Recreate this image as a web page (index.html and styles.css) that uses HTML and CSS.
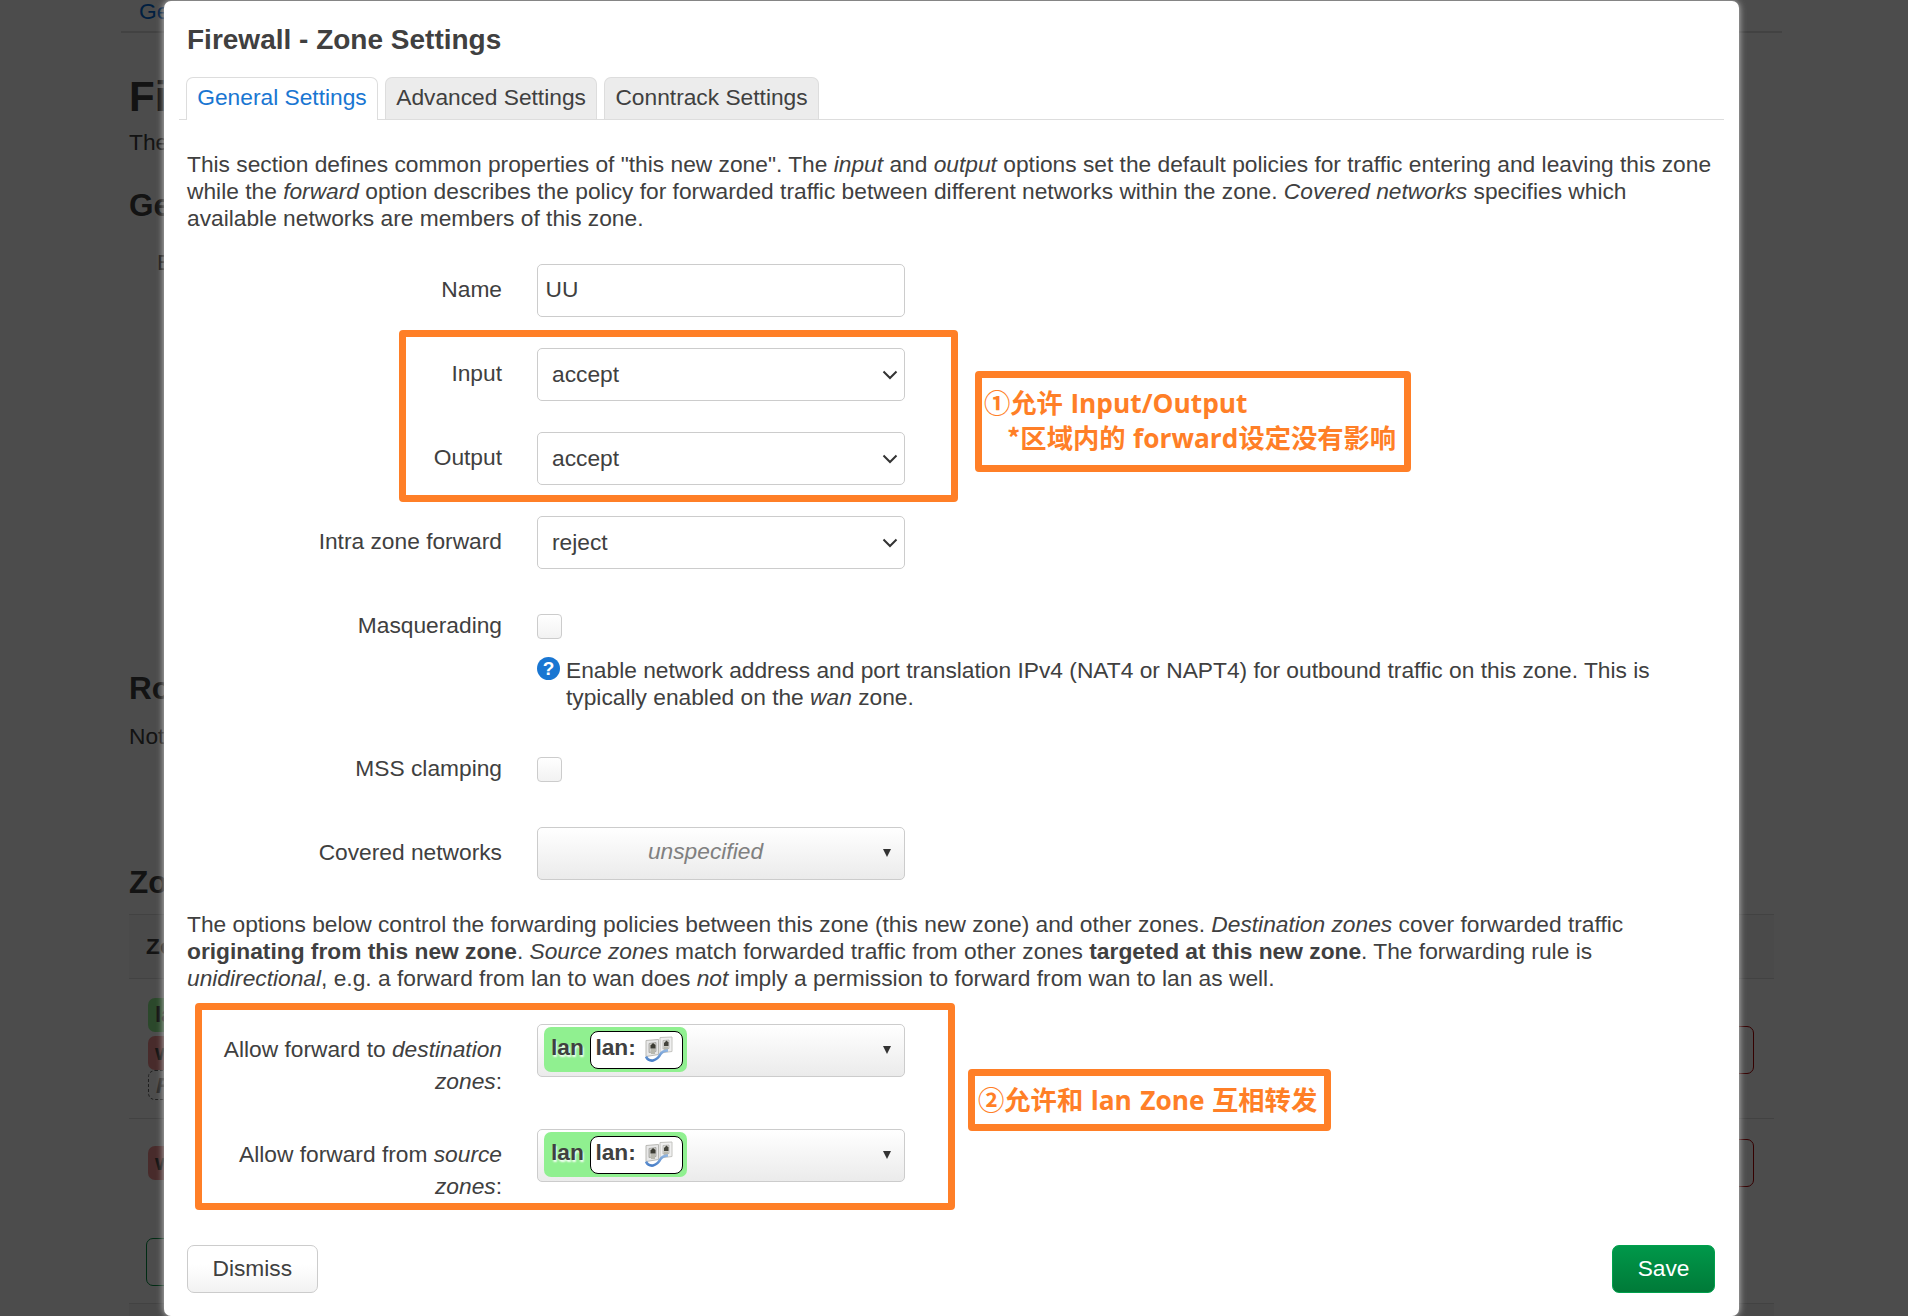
FILE: index.html
```html
<!DOCTYPE html>
<html lang="en">
<head>
<meta charset="utf-8">
<title>Firewall - Zone Settings</title>
<link rel="stylesheet" href="styles.css">
</head>
<body>
<svg class="defs" width="0" height="0" aria-hidden="true">
  <defs>
    <linearGradient id="cable" x1="0" y1="0" x2="0" y2="1"><stop offset="0" stop-color="#8fb4e0"/><stop offset="1" stop-color="#4a80c8"/></linearGradient>
    <symbol id="sockets" viewBox="0 0 28 28">
      <path d="M15 1.500L27 1V15.500L15 17Z" fill="#efefef" stroke="#c4c4c0"/>
      <path d="M18 4.500L24 4V12.500L18 13Z" fill="#dcdcd8" stroke="#b0b0ac" stroke-width=".8"/>
      <path d="M19 7L21.500 4.500L23.500 6.500V10H19Z" fill="#44443c"/>
      <path d="M1 4.500L13.500 3.500V18.500L1 20.500Z" fill="#e8e8e8" stroke="#b8b8b4"/>
      <path d="M4 7.500L11 6.500V15.500L4 16.500Z" fill="#cfcfca" stroke="#a0a09c" stroke-width=".8"/>
      <path d="M5.500 9.500L8 7L10.500 9V12.500H5.500Z" fill="#3c3c34"/>
      <path d="M6 13H10V18H6ZM19 10.500H23V15H19Z" fill="#b8b8ae"/>
      <path d="M1 20.500Q3 25 8 24.500Q13 23 15.500 18Q18 14.500 23 14.500" fill="none" stroke="url(#cable)" stroke-width="2.700"/>
    </symbol>
  </defs>
</svg>
<div class="screen">
  <main class="page">
    <div class="page-tabs"><span class="page-tab">Gen</span></div>
    <h2 class="page-title">Fir</h2>
    <p class="page-text">The</p>
    <h3 class="page-heading">Gen</h3>
    <p class="page-field">E</p>
    <h3 class="page-heading offload">Rou</h3>
    <p class="page-text offload-text">Not</p>
    <h3 class="page-heading zones">Zon</h3>
    <div class="zone-table">
      <div class="zone-head">Zo</div>
      <div class="zone-row first">
        <div class="zone-badges"><span class="chip green">la</span><span class="chip red">w</span><span class="chip empty">R</span></div>
        <span class="delete"></span>
      </div>
      <div class="zone-row second">
        <div class="zone-badges"><span class="chip red">w</span></div>
        <span class="delete"></span>
      </div>
      <div class="add-row"><span class="add"></span></div>
      <div class="zone-foot"></div>
    </div>
  </main>
  <div class="overlay">
    <section class="modal">
      <h4 class="title">Firewall - Zone Settings</h4>
      <nav class="tabs"><span class="tab active">General Settings</span><span class="tab">Advanced Settings</span><span class="tab">Conntrack Settings</span></nav>
      <p class="descr">This section defines common properties of "this new zone". The <em>input</em> and <em>output</em> options set the default policies for traffic entering and leaving this zone<br>while the <em>forward</em> option describes the policy for forwarded traffic between different networks within the zone. <em>Covered networks</em> specifies which<br>available networks are members of this zone.</p>
      <div class="form">
        <div class="row"><label class="label">Name</label><div class="control input">UU</div></div>
        <div class="row"><label class="label">Input</label><div class="control select">accept<svg class="chevron" viewBox="0 0 16 10"><path d="M1.500 1.500L8 8L14.500 1.500"/></svg></div></div>
        <div class="row"><label class="label">Output</label><div class="control select">accept<svg class="chevron" viewBox="0 0 16 10"><path d="M1.500 1.500L8 8L14.500 1.500"/></svg></div></div>
        <div class="row"><label class="label">Intra zone forward</label><div class="control select">reject<svg class="chevron" viewBox="0 0 16 10"><path d="M1.500 1.500L8 8L14.500 1.500"/></svg></div></div>
        <div class="row masq"><label class="label">Masquerading</label>
          <div class="stack"><span class="checkbox"></span>
            <div class="help"><span class="help-icon">?</span><p class="help-text">Enable network address and port translation IPv4 (NAT4 or NAPT4) for outbound traffic on this zone. This is<br>typically enabled on the <em>wan</em> zone.</p></div>
          </div>
        </div>
        <div class="row"><label class="label">MSS clamping</label><div class="stack"><span class="checkbox"></span></div></div>
        <div class="row covered"><label class="label">Covered networks</label><div class="control dropdown"><em class="placeholder">unspecified</em><svg class="caret" viewBox="0 0 8 8"><path d="M0 0H8L4 8Z"/></svg></div></div>
      </div>
      <p class="descr">The options below control the forwarding policies between this zone (this new zone) and other zones. <em>Destination zones</em> cover forwarded traffic<br><strong>originating from this new zone</strong>. <em>Source zones</em> match forwarded traffic from other zones <strong>targeted at this new zone</strong>. The forwarding rule is<br><em>unidirectional</em>, e.g. a forward from lan to wan does <em>not</em> imply a permission to forward from wan to lan as well.</p>
      <div class="form forwards">
        <div class="row tall"><label class="label">Allow forward to <em>destination zones</em>:</label><div class="control dropdown"><span class="zone">lan<span class="iface">lan:<svg class="net"><use href="#sockets"/></svg></span></span><svg class="caret" viewBox="0 0 8 8"><path d="M0 0H8L4 8Z"/></svg></div></div>
        <div class="row tall"><label class="label">Allow forward from <em>source zones</em>:</label><div class="control dropdown"><span class="zone">lan<span class="iface">lan:<svg class="net"><use href="#sockets"/></svg></span></span><svg class="caret" viewBox="0 0 8 8"><path d="M0 0H8L4 8Z"/></svg></div></div>
      </div>
      <div class="actions"><span class="button">Dismiss</span><span class="button save">Save</span></div>
    </section>
  </div>
  <div class="mark mark-io"></div>
  <div class="mark mark-forward"></div>
  <div class="mark note note-io"><div class="note-line">①允许 <span class="latin">Input/Output</span></div><div class="note-line indent">*区域内的 <span class="latin">forward</span>设定没有影响</div></div>
  <div class="mark note note-forward"><div class="note-line">②允许和 <span class="latin">lan Zone</span> 互相转发</div></div>
</div>
</body>
</html>
```
FILE: styles.css
```css
* { box-sizing: border-box; }
body { margin: 0; background: #fff; color: #404040; font: 22.75px/31.5px "Liberation Sans", Arial, sans-serif; }
h2, h3, h4, p { margin: 0; }
.defs { display: block; }
.screen { position: relative; width: 1908px; height: 1316px; overflow: hidden; white-space: nowrap; }

/* page behind the dialog */
.page { width: 1661px; height: 1316px; margin-left: 121px; padding-right: 8px; overflow: hidden; }
.page-tabs { height: 33px; margin-right: -8px; border-bottom: 2px solid #ddd; color: #0069d6; display: flex; }
.page-tab { height: 33px; padding-left: 18px; line-height: 22px; }
.page-title { margin: 32px 0 -1px 8px; height: 63px; font-size: 42px; line-height: 63px; }
.page-text { margin-left: 8px; height: 31px; }
.page-heading { margin-left: 8px; height: 63px; line-height: 63px; font-size: 31.5px; margin-top: 16px; }
.page-field { margin-left: 36px; height: 31px; margin-top: 10px; }
.page-heading.offload { margin-top: 379px; }
.offload-text { margin-top: 1px; }
.page-heading.zones { margin-top: 99px; }
.zone-table { margin-left: 8px; }
.zone-head { height: 65px; border-top: 1px solid #ddd; border-bottom: 1px solid #ddd; background: #f9f9f9; padding: 16px 17px; font-weight: 700; }
.zone-row { display: flex; align-items: flex-start; justify-content: space-between; border-bottom: 1px solid #ddd; padding: 19px 20px 0 19px; }
.zone-row.first { height: 140px; }
.zone-row.second { height: 104px; padding-top: 27px; border: 0; }
.zone-badges { display: flex; flex-direction: column; width: 100px; }
.chip { height: 34px; line-height: 32px; border-radius: 7px; padding-left: 7px; font-weight: 700; margin-bottom: 4px; }
.green { background: #90f090; }
.red { background: #f09090; margin-bottom: 0; }
.empty { height: 30px; line-height: 28px; border: 1px dashed #666; font-style: italic; color: #888; }
.delete { width: 120px; height: 48px; margin-top: 28px; border: 1px solid #b00000; border-radius: 7px; }
.second .delete { margin-top: -7px; }
.add-row { height: 80px; padding: 15px 17px 0; }
.add { display: block; width: 120px; height: 48px; border: 1px solid #009040; border-radius: 7px; }
.zone-foot { height: 30px; border-top: 1px solid #ddd; background: #f5f5f5; }

/* dialog */
.overlay { position: absolute; inset: 0; background: rgba(0,0,0,.7); display: flex; justify-content: center; align-items: flex-start; }
.modal { width: 1575px; height: 1315px; margin: 1px 5px 0 0; padding: 0 23px 0 23px; background: #fff; border-radius: 7px; box-shadow: 0 0 7px #ccc; }
.title { height: 76px; padding-top: 21px; font-size: 28px; line-height: 36px; }
.tabs { display: flex; gap: 7px; height: 43px; margin: 0 -8px; padding-left: 7px; border-bottom: 1px solid #ddd; }
.tab { height: 42px; padding: 0 10.25px; line-height: 39px; background: #ececec; border: 1px solid #ddd; border-bottom: 0; border-radius: 7px 7px 0 0; }
.tab.active { height: 43px; background: #fff; color: #1976d2; }
.descr { height: 81px; margin-top: 31px; line-height: 27px; }
.form { margin-top: 32px; }
.form + .descr { margin-top: 1px; }
.form.forwards { margin-top: 32px; }
.row { display: flex; gap: 35px; height: 84px; }
.masq { height: 143px; }
.covered { height: 83px; }
.tall { height: 105px; }
.label { width: 315px; padding: 10px 0 0 24px; text-align: right; white-space: normal; }
.control { display: flex; align-items: center; width: 368px; height: 53px; border: 1px solid #ccc; border-radius: 5px; }
.input { padding: 0 0 2px 7.5px; }
.select { padding: 0 6px 0 14px; justify-content: space-between; }
.chevron { width: 16px; height: 10px; fill: none; stroke: #333; stroke-width: 2; }
.dropdown { padding: 0 13px 0 6px; justify-content: space-between; background: linear-gradient(#fff, #ebebeb); }
.caret { width: 8px; height: 8px; fill: #333; margin-top: -1px; }
.placeholder { flex: 1; text-align: center; color: #808080; padding-right: 16px; margin-top: -3px; }
.stack { padding-top: 14px; }
.checkbox { display: block; width: 25px; height: 25px; border: 1px solid #ccc; border-radius: 4px; background: linear-gradient(#fff, #f2f2f2); }
.help { display: flex; gap: 6px; margin-top: 18px; }
.help-icon { width: 23px; height: 23px; border-radius: 50%; background: #1976d2; color: #fff; font: 700 19px/23px "Liberation Sans", Arial, sans-serif; text-align: center; }
.help-text { line-height: 27px; }
.zone { display: flex; align-items: center; height: 45px; padding: 0 4px 3px 7px; gap: 6.500px; border-radius: 7px; background: #90f090; font-weight: 700; text-shadow: 1px 2px 2px #fff; margin-top: -2px; }
.iface { display: flex; align-items: center; gap: 9px; width: 93px; height: 38px; margin-top: 3px; padding: 0 0 3px 4px; border: 1px solid #000; border-radius: 8px; background: #fff; }
.net { width: 28px; height: 28px; margin-top: 3px; }
.actions { display: flex; justify-content: space-between; margin-top: 11px; }
.button { height: 48px; padding: 0 24.500px; line-height: 44px; border: 1px solid #ccc; border-radius: 7px; background: linear-gradient(#fff 40%, #f2f2f2); }
.save { margin-right: 1px; border-color: #00a04c; background: linear-gradient(#00984a, #007a38); color: #fff; }

/* annotations drawn over the dialog */
.mark { position: absolute; border: 7px solid #ff7f27; border-radius: 4px; }
.mark-io { left: 399px; top: 330px; width: 559px; height: 172px; }
.mark-forward { left: 195px; top: 1003px; width: 760px; height: 207px; }
.note { color: #ff7f27; font: 700 26.300px/35px "Noto Sans CJK SC", sans-serif; word-spacing: 1.500px; }
.note-line { height: 35px; }
.latin { font-family: "Open Sans", "Noto Sans", sans-serif; line-height: 1; }
.note-io { left: 975px; top: 371px; width: 436px; height: 101px; padding: 6px 2px; }
.note-forward { left: 968px; top: 1069px; width: 363px; height: 62px; padding: 5px 3px; }
.indent { padding-left: 23px; }
```
